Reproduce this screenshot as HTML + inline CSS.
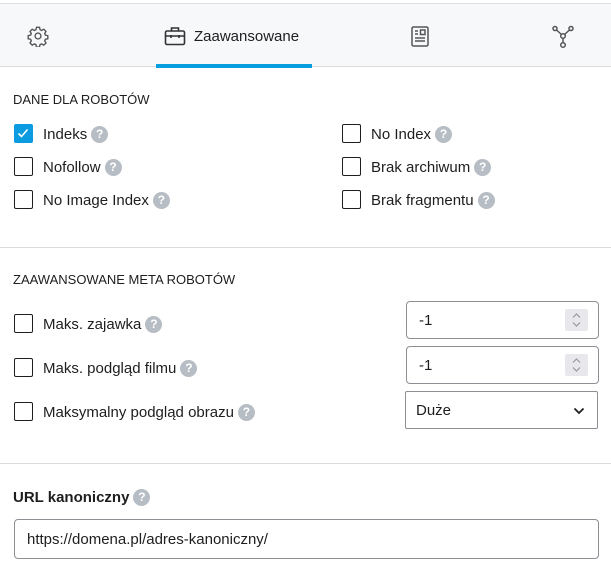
<!DOCTYPE html>
<html><head><meta charset="utf-8"><style>
*{box-sizing:border-box;margin:0;padding:0}
body{width:611px;height:583px;background:#fff;font-family:"Liberation Sans",sans-serif;color:#1e1e1e;position:relative;overflow:hidden}
.a{position:absolute}
.tabs{left:0;top:3px;width:611px;height:64px;background:#f7f8fa;border-top:1px solid #e0e0e0;border-bottom:1px solid #dcdcde}
.ul{left:156px;top:64px;width:156px;height:4px;background:#079ee0}
.h{font-size:13px;color:#1e1e1e}
.cb{width:19px;height:19px;border:1.5px solid #1e1e1e;border-radius:2px;background:#fff}
.cb.on{background:#0a9be0;border-color:#0a9be0}
.lbl{font-size:15px;color:#1e1e1e;white-space:nowrap}
.q{display:inline-block;width:17px;height:17px;border-radius:50%;background:#b7bdc4;color:#fff;font-size:12px;font-weight:bold;text-align:center;line-height:17px;vertical-align:1px;margin-left:4px}
.hr{left:0;width:611px;height:1px;background:#dcdcde}
.in{border:1px solid #8c8f94;border-radius:4px;background:#fff;font-size:15px;padding-left:12px;display:flex;align-items:center}
.sp{position:absolute;right:10px;top:7px;width:23px;height:22px;background:#e8e8ec;border-radius:2px}
</style></head><body>
<div class="a tabs"></div>
<div class="a ul"></div>
<svg class="a" style="left:27px;top:25px" width="22" height="22" viewBox="0 0 24 24" fill="none" stroke="#555" stroke-width="1.5"><path d="M10.3 2.5h3.4l.5 2.6 1.8.9 2.3-1.4 2.4 2.4-1.4 2.3.8 1.8 2.6.5v3.4l-2.6.5-.8 1.8 1.4 2.3-2.4 2.4-2.3-1.4-1.8.8-.5 2.6h-3.4l-.5-2.6-1.8-.8-2.3 1.4-2.4-2.4 1.4-2.3-.8-1.8-2.6-.5v-3.4l2.6-.5.8-1.8-1.4-2.3 2.4-2.4 2.3 1.4 1.8-.9z"/><circle cx="12" cy="12" r="3.2"/></svg>
<svg class="a" style="left:164px;top:26px" width="22" height="20" viewBox="0 0 22 20" fill="none" stroke="#333" stroke-width="1.6"><rect x="1.5" y="5" width="19" height="13.5" rx="1.5"/><path d="M7.5 5V2h7v3M1.5 10h19M7 9v3M15 9v3"/></svg>
<div class="a" style="left:194px;top:28px;font-size:15px;color:#1e1e1e">Zaawansowane</div>
<svg class="a" style="left:411px;top:26px" width="18" height="21" viewBox="0 0 18 21" fill="none" stroke="#555" stroke-width="1.5"><rect x="1" y="1" width="16" height="19" rx="1.5"/><path d="M4 5h3M4 8h3M4 12h10M4 15h10"/><rect x="9.5" y="4" width="4.5" height="4.5"/></svg>
<svg class="a" style="left:552px;top:25px" width="22" height="24" viewBox="0 0 22 24" fill="none" stroke="#555" stroke-width="1.5"><circle cx="3" cy="3.5" r="2"/><circle cx="19" cy="3.5" r="2"/><circle cx="11" cy="20" r="2.3"/><circle cx="11" cy="11" r="2.3"/><path d="M4.5 5l5 4.5M17.5 5l-5 4.5M11 13.3v4.4"/></svg>

<div class="a h" style="left:13px;top:92px">DANE DLA ROBOTÓW</div>
<div class="a cb on" style="left:14px;top:124px"><svg width="16" height="16" viewBox="0 0 16 16"><path d="M3.5 8.5l3 3 6-7" stroke="#fff" stroke-width="1.6" fill="none"/></svg></div>
<div class="a lbl" style="left:43px;top:126px">Indeks<span class="q">?</span></div>
<div class="a cb" style="left:14px;top:157px"></div>
<div class="a lbl" style="left:43px;top:159px">Nofollow<span class="q">?</span></div>
<div class="a cb" style="left:14px;top:190px"></div>
<div class="a lbl" style="left:43px;top:192px">No Image Index<span class="q">?</span></div>
<div class="a cb" style="left:342px;top:124px"></div>
<div class="a lbl" style="left:371px;top:126px">No Index<span class="q">?</span></div>
<div class="a cb" style="left:342px;top:157px"></div>
<div class="a lbl" style="left:371px;top:159px">Brak archiwum<span class="q">?</span></div>
<div class="a cb" style="left:342px;top:190px"></div>
<div class="a lbl" style="left:371px;top:192px">Brak fragmentu<span class="q">?</span></div>

<div class="a hr" style="top:247px"></div>
<div class="a h" style="left:13px;top:272px">ZAAWANSOWANE META ROBOTÓW</div>
<div class="a cb" style="left:14px;top:314px"></div>
<div class="a lbl" style="left:43px;top:316px">Maks. zajawka<span class="q">?</span></div>
<div class="a cb" style="left:14px;top:358px"></div>
<div class="a lbl" style="left:43px;top:360px">Maks. podgląd filmu<span class="q">?</span></div>
<div class="a cb" style="left:14px;top:402px"></div>
<div class="a lbl" style="left:43px;top:404px">Maksymalny podgląd obrazu<span class="q">?</span></div>
<div class="a in" style="left:406px;top:301px;width:193px;height:38px">-1<div class="sp"><svg width="23" height="22" viewBox="0 0 23 22" fill="none" stroke="#999" stroke-width="1.2"><path d="M8 8.5l3.5-3.5 3.5 3.5M8 13.5l3.5 3.5 3.5-3.5"/></svg></div></div>
<div class="a in" style="left:406px;top:346px;width:193px;height:38px">-1<div class="sp"><svg width="23" height="22" viewBox="0 0 23 22" fill="none" stroke="#999" stroke-width="1.2"><path d="M8 8.5l3.5-3.5 3.5 3.5M8 13.5l3.5 3.5 3.5-3.5"/></svg></div></div>
<div class="a in" style="left:405px;top:391px;width:193px;height:38px;border-radius:2px;padding-left:10px">Duże<svg style="position:absolute;right:12px;top:15px" width="12" height="8" viewBox="0 0 12 8" fill="none" stroke="#1e1e1e" stroke-width="1.8"><path d="M1.5 1.5l4.5 4.5 4.5-4.5"/></svg></div>

<div class="a hr" style="top:463px"></div>
<div class="a" style="left:13px;top:489px;font-size:15px;font-weight:bold">URL kanoniczny<span class="q">?</span></div>
<div class="a in" style="left:14px;top:519px;width:585px;height:40px;border-radius:4px">https://domena.pl/adres-kanoniczny/</div>
</body></html>
